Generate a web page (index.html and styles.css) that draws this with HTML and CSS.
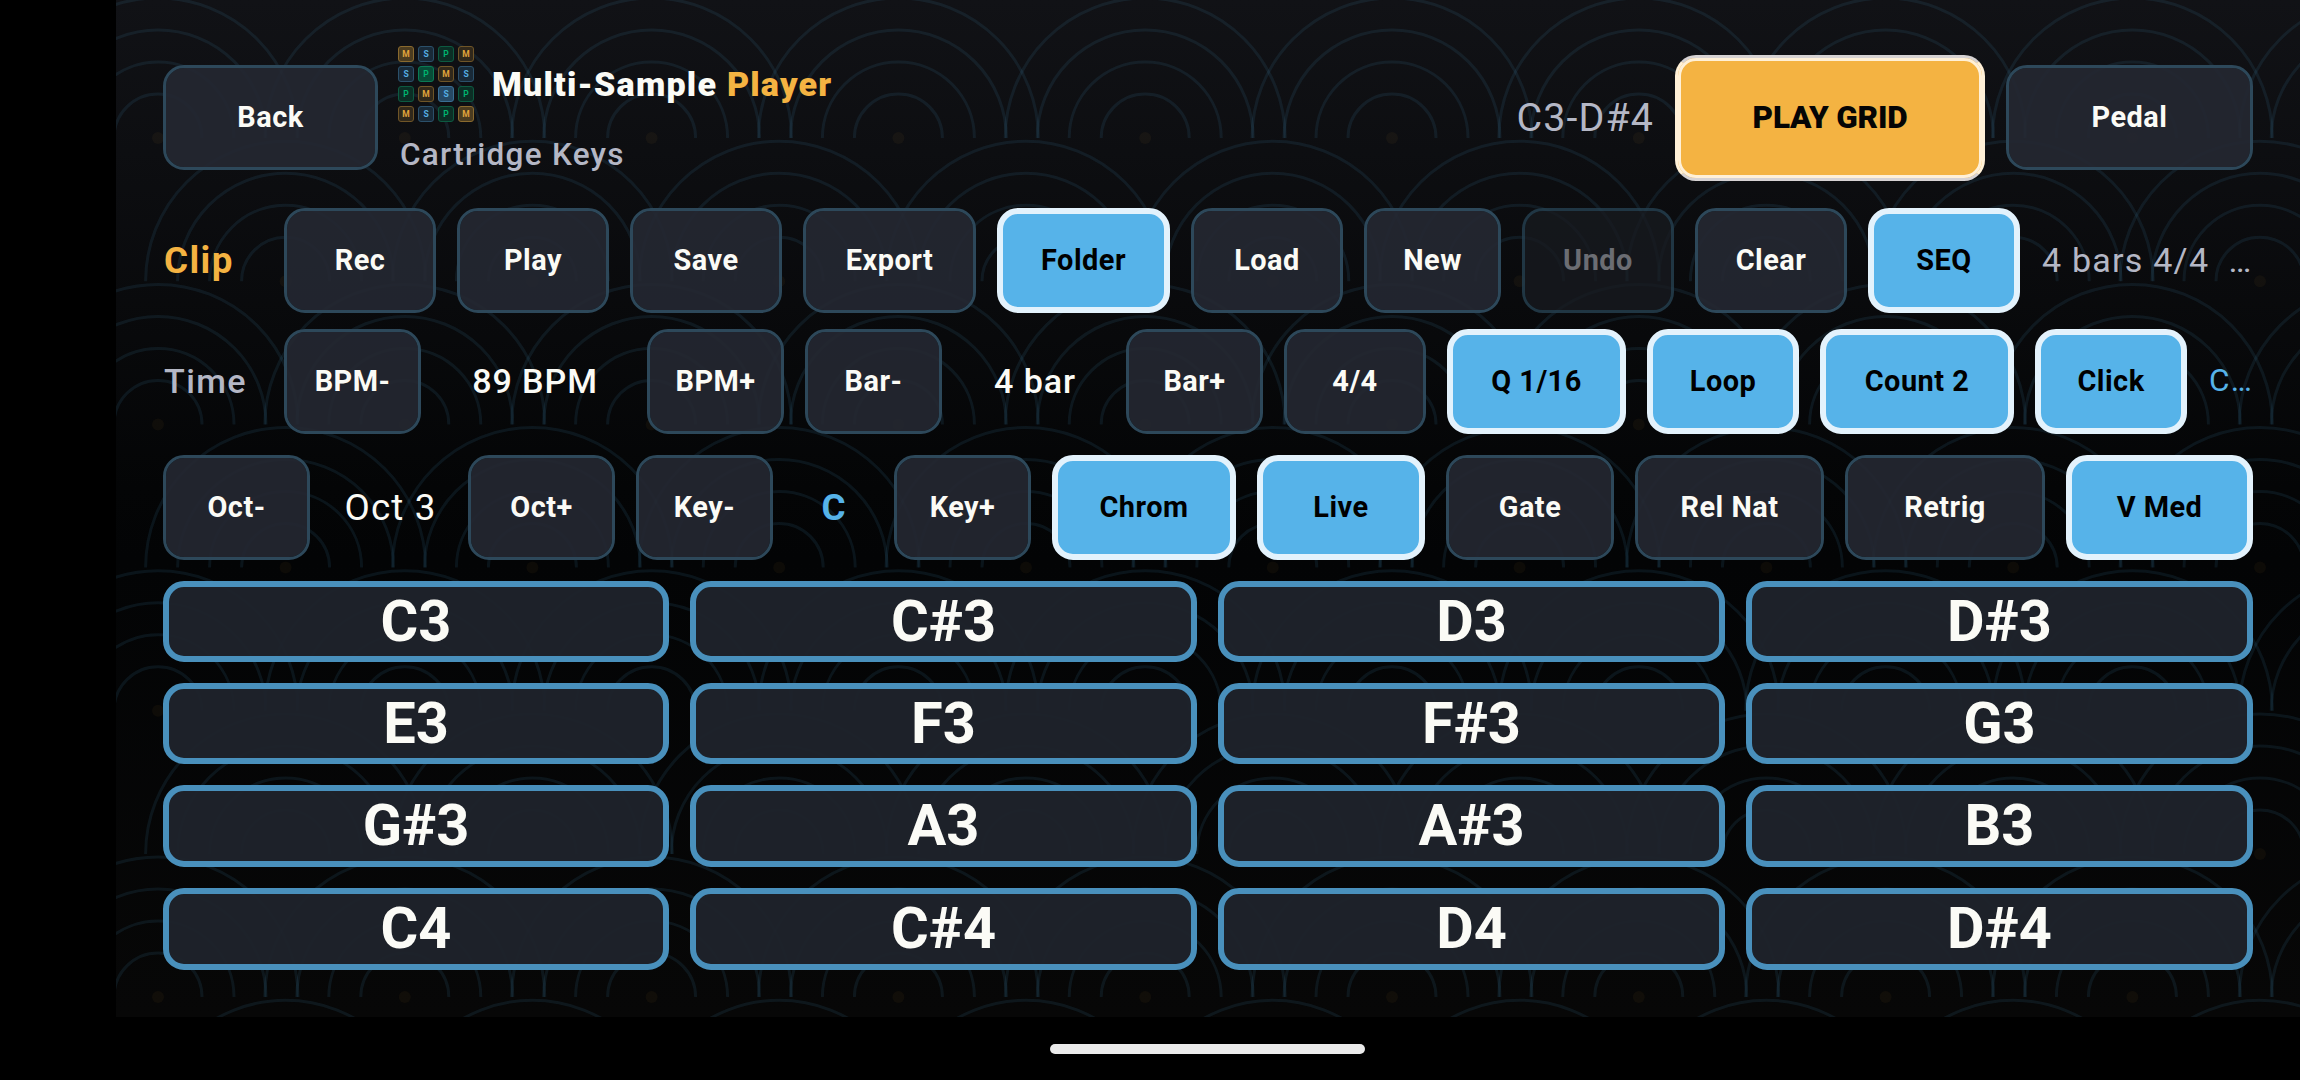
FILE: index.html
```html
<!DOCTYPE html>
<html lang="en">
<head>
<meta charset="utf-8">
<title>Multi-Sample Player</title>
<link rel="stylesheet" href="styles.css">
</head>
<body>
<main class="app">
  <svg class="waves" width="2184" height="1017" viewBox="116 0 2184 1017" aria-hidden="true">
    <defs>
      <g id="wave">
        <path d="M-44 0a44 44 0 0 1 88 0M-76 0a76 76 0 0 1 152 0"/>
        <path d="M-108 0a108 108 0 0 1 216 0"/>
        <path d="M-140 0a140 140 0 0 1 280 0"/>
        <circle class="seed" r="6"/>
      </g>
      <g id="row-a">
        <use href="#wave" x="158"/><use href="#wave" x="404.8"/><use href="#wave" x="651.6"/><use href="#wave" x="898.4"/><use href="#wave" x="1145.2"/><use href="#wave" x="1392"/><use href="#wave" x="1638.8"/><use href="#wave" x="1885.6"/><use href="#wave" x="2132.4"/><use href="#wave" x="2379.2"/>
      </g>
      <g id="row-b">
        <use href="#wave" x="285.6"/><use href="#wave" x="532.4"/><use href="#wave" x="779.2"/><use href="#wave" x="1026"/><use href="#wave" x="1272.8"/><use href="#wave" x="1519.6"/><use href="#wave" x="1766.4"/><use href="#wave" x="2013.2"/><use href="#wave" x="2260"/>
      </g>
    </defs>
    <use href="#row-a" y="138"/><use href="#row-b" y="281.2"/><use href="#row-a" y="424.4"/><use href="#row-b" y="567.5"/>
    <use href="#row-a" y="710.7"/><use href="#row-b" y="853.9"/><use href="#row-a" y="997"/><use href="#row-b" y="1140.2"/>
  </svg>

  <header class="header">
    <button class="btn w-back">Back</button>
    <div class="brand">
      <div class="brand-top">
        <div class="logo" aria-hidden="true">
          <i class="m hi">M</i><i class="s">S</i><i class="p">P</i><i class="m">M</i>
          <i class="s">S</i><i class="p hi">P</i><i class="m">M</i><i class="s">S</i>
          <i class="p">P</i><i class="m">M</i><i class="s hi">S</i><i class="p">P</i>
          <i class="m">M</i><i class="s">S</i><i class="p">P</i><i class="m hi">M</i>
        </div>
        <h1 class="title">Multi-Sample <span class="accent">Player</span></h1>
      </div>
      <p class="subtitle">Cartridge Keys</p>
    </div>
    <span class="range">C3-D#4</span>
    <button class="btn primary">PLAY GRID</button>
    <button class="btn w-pedal">Pedal</button>
  </header>

  <section class="row clip-row">
    <span class="row-label clip">Clip</span>
    <button class="btn w152">Rec</button>
    <button class="btn w152">Play</button>
    <button class="btn w152">Save</button>
    <button class="btn w173">Export</button>
    <button class="btn on w173">Folder</button>
    <button class="btn w152">Load</button>
    <button class="btn w137">New</button>
    <button class="btn w152 off" disabled>Undo</button>
    <button class="btn w152">Clear</button>
    <button class="btn on w152">SEQ</button>
    <span class="status">4 bars 4/4  …</span>
  </section>

  <section class="row time-row">
    <span class="row-label time">Time</span>
    <button class="btn w137">BPM-</button>
    <span class="value bpm">89 BPM</span>
    <button class="btn w137">BPM+</button>
    <button class="btn w137">Bar-</button>
    <span class="value bars">4 bar</span>
    <button class="btn w137">Bar+</button>
    <button class="btn w142">4/4</button>
    <button class="btn on w179">Q 1/16</button>
    <button class="btn on w152">Loop</button>
    <button class="btn on w194">Count 2</button>
    <button class="btn on w152">Click</button>
    <span class="status chip">C…</span>
  </section>

  <section class="row key-row">
    <button class="btn w147">Oct-</button>
    <span class="value octave">Oct 3</span>
    <button class="btn w147">Oct+</button>
    <button class="btn w137">Key-</button>
    <span class="value key">C</span>
    <button class="btn w137">Key+</button>
    <button class="btn on w184">Chrom</button>
    <button class="btn on w168">Live</button>
    <button class="btn w168">Gate</button>
    <button class="btn w189">Rel Nat</button>
    <button class="btn w200">Retrig</button>
    <button class="btn on grow">V Med</button>
  </section>

  <section class="pads">
    <button class="pad">C3</button><button class="pad">C#3</button><button class="pad">D3</button><button class="pad">D#3</button>
    <button class="pad">E3</button><button class="pad">F3</button><button class="pad">F#3</button><button class="pad">G3</button>
    <button class="pad">G#3</button><button class="pad">A3</button><button class="pad">A#3</button><button class="pad">B3</button>
    <button class="pad">C4</button><button class="pad">C#4</button><button class="pad">D4</button><button class="pad">D#4</button>
  </section>
</main>
<footer class="navbar"><div class="handle"></div></footer>
</body>
</html>
```
FILE: styles.css
```css
* { box-sizing: border-box; }

body {
  margin: 0;
  width: 2300px;
  height: 1080px;
  overflow: hidden;
  background: #000;
  color: #fbfbf6;
  font-family: Roboto, "Liberation Sans", sans-serif;
}

.app {
  position: relative;
  margin-left: 116px;
  height: 1017px;
  padding: 47px 47px 0;
  background: linear-gradient(#111216 0%, #040506 48%, #030405 55%, #070707 100%);
}

.waves {
  position: absolute;
  inset: 0;
  fill: none;
  stroke: #4fa8d8;
  stroke-opacity: .1;
  stroke-width: 3;
}
.waves .seed { fill: #f4b342; fill-opacity: .045; stroke: none; }

.header, .row, .pads { position: relative; }

/* Header */
.header {
  display: flex;
  align-items: center;
  gap: 21px;
  height: 141px;
}
.brand { flex: 1; align-self: flex-start; }
.brand-top { display: flex; align-items: center; height: 76px; gap: 18px; }
.logo {
  display: grid;
  grid-template-columns: repeat(4, 16px);
  grid-auto-rows: 16px;
  gap: 4px;
  margin: -2px 0 0 -1px;
}
.logo i {
  display: flex;
  align-items: center;
  justify-content: center;
  border: 1px solid;
  border-radius: 3px;
  font: 700 8.5px/1 Roboto, sans-serif;
}
.logo .m { color: #e0a43c; border-color: #6f5527; background: #30281b; }
.logo .s { color: #55aee2; border-color: #2b506a; background: #192a38; }
.logo .p { color: #00b36f; border-color: #0d5a41; background: #0c2e25; }
.logo .m.hi { border-color: #8a6a2e; background: #4b3c20; }
.logo .s.hi { border-color: #3a6f94; background: #264964; }
.logo .p.hi { border-color: #0b7a54; background: #084c37; }

.title { margin: -2px 0 0; font-size: 34.1px; font-weight: 900; line-height: 44px; letter-spacing: 1.2px; white-space: nowrap; }
.accent { color: #f4b342; }
.subtitle { margin: 11px 0 0 1px; color: #b4b7c5; font-size: 31.5px; font-weight: 500; line-height: 42px; letter-spacing: 1.25px; }
.range { color: #b4b7c5; font-size: 39.4px; letter-spacing: 1.1px; }

/* Buttons */
.btn {
  flex: none;
  height: 105px;
  padding: 0;
  border: 3px solid #2d485a;
  border-radius: 21px;
  background: rgba(36, 40, 49, .91);
  background-clip: padding-box;
  color: #fbfbf6;
  font: 700 28.9px/1 Roboto, "Liberation Sans", sans-serif;
  letter-spacing: .5px;
  white-space: nowrap;
}
.btn.on { border: 6px solid #e3f2fc; background: #56b3e9; color: #000; }
.btn.off { border-color: rgba(36, 62, 78, .85); background-color: rgba(24, 27, 32, .75); color: #6b6d73; }
.btn.primary {
  width: 310px;
  height: 126px;
  border: 3px solid;
  border-color: #d6d2d3 #fff0d7;
  background: #f4b342;
  box-shadow: inset 0 0 0 3px #fff0d7;
  color: #050505;
  font-size: 31.5px;
  font-weight: 900;
  letter-spacing: -.2px;
}

.w-back { width: 215px; }
.w-pedal { width: 247px; }
.w137 { width: 137px; }
.w142 { width: 142px; }
.w147 { width: 147px; }
.w152 { width: 152px; }
.w168 { width: 168px; }
.w173 { width: 173px; }
.w179 { width: 179px; }
.w184 { width: 184px; }
.w189 { width: 189px; }
.w194 { width: 194px; }
.w200 { width: 200px; }
.grow { flex: 1; }

/* Control rows */
.row { display: flex; align-items: center; gap: 21px; height: 105px; white-space: pre; }
.clip-row { margin-top: 20px; }
.time-row { margin-top: 16px; }
.key-row { margin-top: 21px; }

.row-label { width: 100px; padding-left: 1px; }
.clip { color: #f4b342; font-size: 36.75px; font-weight: 700; letter-spacing: 1.4px; }
.time { color: #b4b7c5; font-size: 34.1px; font-weight: 500; letter-spacing: 1.4px; }
.status { padding: 0 0 2px 1px; color: #b4b7c5; font-size: 34.1px; letter-spacing: 1.2px; }
.status.chip { color: #56b3e9; font-size: 31.5px; }

.value { text-align: center; font-size: 34.1px; font-weight: 500; letter-spacing: .9px; }
.time, .bpm, .bars { padding-bottom: 2px; }
.bpm { width: 184px; padding-left: 2px; }
.bars { width: 142px; padding-left: 2px; }
.octave { width: 116px; padding-left: 3px; font-size: 36.75px; font-weight: 400; letter-spacing: 1.1px; }
.key { width: 79px; padding-left: 1px; color: #56b3e9; font-size: 36.75px; font-weight: 700; }

/* Pads */
.pads {
  display: grid;
  grid-template-columns: 506px 507px 507px 507px;
  grid-template-rows: 81px 81px 82px 82px;
  gap: 21px;
  margin-top: 21px;
}
.pad {
  padding: 0;
  border: 6px solid #4990bc;
  border-radius: 21px;
  background: rgba(31, 35, 43, .95);
  color: #fbfbf6;
  font: 700 57.75px/1 Roboto, "Liberation Sans", sans-serif;
}

.navbar { display: flex; justify-content: center; height: 63px; padding: 27px 0 0 115px; }
.handle { width: 315px; height: 10px; border-radius: 5px; background: #ebebeb; }
```
